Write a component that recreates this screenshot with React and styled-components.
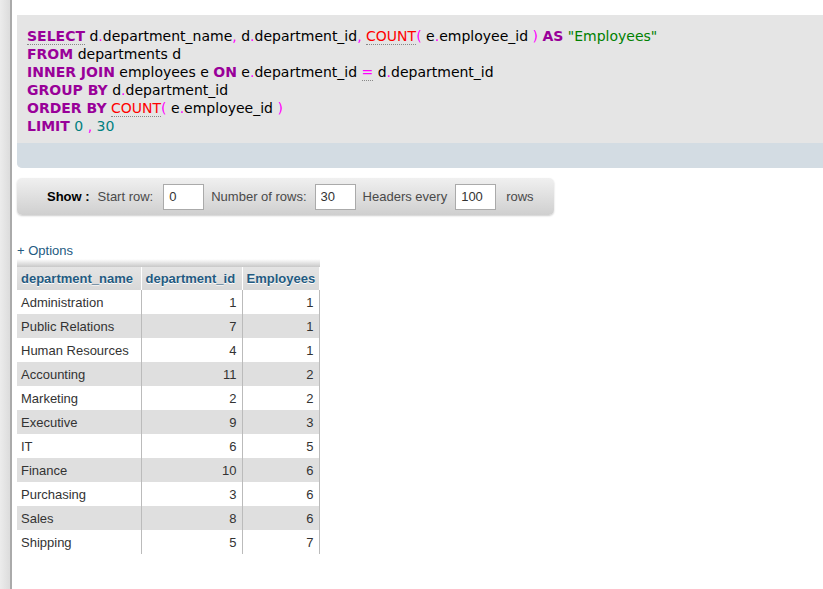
import React from 'react';
import styled, { createGlobalStyle } from 'styled-components';

const GlobalStyle = createGlobalStyle`
  html, body {
    margin: 0;
    padding: 0;
    background: #fff;
  }
  body {
    font-family: "Liberation Sans", Arial, sans-serif;
  }
`;

const Page = styled.div`
  display: flex;
  min-height: 100vh;
`;

const LeftFrame = styled.div`
  width: 10px;
  flex-shrink: 0;
  background: linear-gradient(to right, #ececec, #dcdcdc);
  border-right: 2px solid #aaa;
`;

const Main = styled.div`
  flex-grow: 1;
  padding: 15px 0 0 5px;
  min-width: 0;
`;

const SqlBox = styled.div`
  background: #e5e5e5;
  border-radius: 0 0 0 5px;
  overflow: hidden;
`;

const Code = styled.div`
  padding: 12px 10px 8px;
  font-family: "DejaVu Sans", Verdana, sans-serif;
  font-size: 14px;
  line-height: 18px;
  color: #000;
  white-space: pre;
`;

const ToolsRow = styled.div`
  height: 25px;
  background: #d3dce3;
`;

const Kw = styled.span`
  color: #990099;
  font-weight: bold;
  border-bottom: ${p => (p.$doc ? '1px dotted #888' : 'none')};
`;

const Fn = styled.span`
  color: #ff0000;
  border-bottom: 1px dotted #888;
`;

const Punct = styled.span`
  color: #ff00ff;
  border-bottom: ${p => (p.$doc ? '1px dotted #888' : 'none')};
`;

const Num = styled.span`
  color: #008080;
`;

const Str = styled.span`
  color: #008000;
`;

const ShowBar = styled.div`
  margin-top: 10px;
  width: 537px;
  height: 37px;
  box-sizing: border-box;
  padding-left: 30px;
  display: flex;
  align-items: center;
  background: linear-gradient(#f0f0f0, #cfcfcf);
  border-radius: 5px;
  box-shadow: 0 1px 2px rgba(0, 0, 0, 0.2);
  font-size: 13px;
  color: #4a4a4a;
`;

const ShowLabel = styled.b`
  color: #000;
  margin-right: 8px;
`;

const Label = styled.span`
  margin-right: ${p => p.$gap || 7}px;
  margin-left: ${p => p.$lead || 0}px;
`;

const NumInput = styled.input`
  width: 41px;
  height: 26px;
  box-sizing: border-box;
  border: 1px solid #aaa;
  padding: 0 5px;
  font-family: "Liberation Sans", Arial, sans-serif;
  font-size: 13px;
  color: #333;
  background: #fff;
  margin-right: 7px;
  outline: none;
`;

const OptionsLink = styled.a`
  display: block;
  margin-top: 28px;
  font-size: 13px;
  line-height: 16px;
  color: #235a81;
  text-decoration: none;
`;

const TableWrap = styled.div`
  display: inline-block;
`;

const TopBand = styled.div`
  height: 8px;
  background: linear-gradient(#ffffff, #c8c8c8);
`;

const Table = styled.table`
  border-collapse: collapse;
  table-layout: fixed;
  font-size: 13px;
  color: #333;
`;

const Th = styled.th`
  height: 23px;
  padding: 0 3px 0 4px;
  background: linear-gradient(#e4e4e4, #d8d8d8);
  color: #235a81;
  text-shadow: 0 1px 0 #fff;
  font-weight: bold;
  text-align: left;
  white-space: nowrap;
  border-right: 1px solid #fff;
  &:last-child {
    border-right: none;
  }
`;

const Row = styled.tr`
  background: ${p => (p.$odd ? '#dfdfdf' : '#fff')};
`;

const Td = styled.td`
  height: 24px;
  padding: 0 5px 0 4px;
  text-align: ${p => (p.$num ? 'right' : 'left')};
  border-right: 1px solid #bbb;
  white-space: nowrap;
`;

const rows = [
  ['Administration', 1, 1],
  ['Public Relations', 7, 1],
  ['Human Resources', 4, 1],
  ['Accounting', 11, 2],
  ['Marketing', 2, 2],
  ['Executive', 9, 3],
  ['IT', 6, 5],
  ['Finance', 10, 6],
  ['Purchasing', 3, 6],
  ['Sales', 8, 6],
  ['Shipping', 5, 7],
];

const App = () => (
  <>
    <GlobalStyle />
    <Page>
      <LeftFrame />
      <Main>
        <SqlBox>
          <Code>
            <Kw $doc>SELECT</Kw> d<Punct>.</Punct>department_name<Punct>,</Punct> d<Punct>.</Punct>department_id<Punct>,</Punct>{' '}
            <Fn>COUNT</Fn><Punct>(</Punct> e<Punct>.</Punct>employee_id <Punct>)</Punct> <Kw>AS</Kw> <Str>"Employees"</Str>
            {'\n'}
            <Kw>FROM</Kw> departments d
            {'\n'}
            <Kw>INNER JOIN</Kw> employees e <Kw>ON</Kw> e<Punct>.</Punct>department_id <Punct $doc>=</Punct> d<Punct>.</Punct>department_id
            {'\n'}
            <Kw>GROUP BY</Kw> d<Punct>.</Punct>department_id
            {'\n'}
            <Kw>ORDER BY</Kw> <Fn>COUNT</Fn><Punct>(</Punct> e<Punct>.</Punct>employee_id <Punct>)</Punct>
            {'\n'}
            <Kw>LIMIT</Kw> <Num>0</Num> <Punct>,</Punct> <Num>30</Num>
          </Code>
          <ToolsRow />
        </SqlBox>

        <ShowBar>
          <ShowLabel>Show :</ShowLabel>
          <Label $gap={10}>Start row:</Label>
          <NumInput defaultValue="0" />
          <Label $gap={8}>Number of rows:</Label>
          <NumInput defaultValue="30" />
          <Label $gap={8}>Headers every</Label>
          <NumInput defaultValue="100" />
          <Label $lead={3}>rows</Label>
        </ShowBar>

        <OptionsLink href="#">+ Options</OptionsLink>

        <TableWrap>
          <TopBand />
          <Table>
            <colgroup>
              <col style={{ width: 124 }} />
              <col style={{ width: 101 }} />
              <col style={{ width: 77 }} />
            </colgroup>
            <thead>
              <tr>
                <Th>department_name</Th>
                <Th>department_id</Th>
                <Th>Employees</Th>
              </tr>
            </thead>
            <tbody>
              {rows.map(([name, id, count], i) => (
                <Row key={name} $odd={i % 2 === 1}>
                  <Td>{name}</Td>
                  <Td $num>{id}</Td>
                  <Td $num>{count}</Td>
                </Row>
              ))}
            </tbody>
          </Table>
        </TableWrap>
      </Main>
    </Page>
  </>
);

export default App;
